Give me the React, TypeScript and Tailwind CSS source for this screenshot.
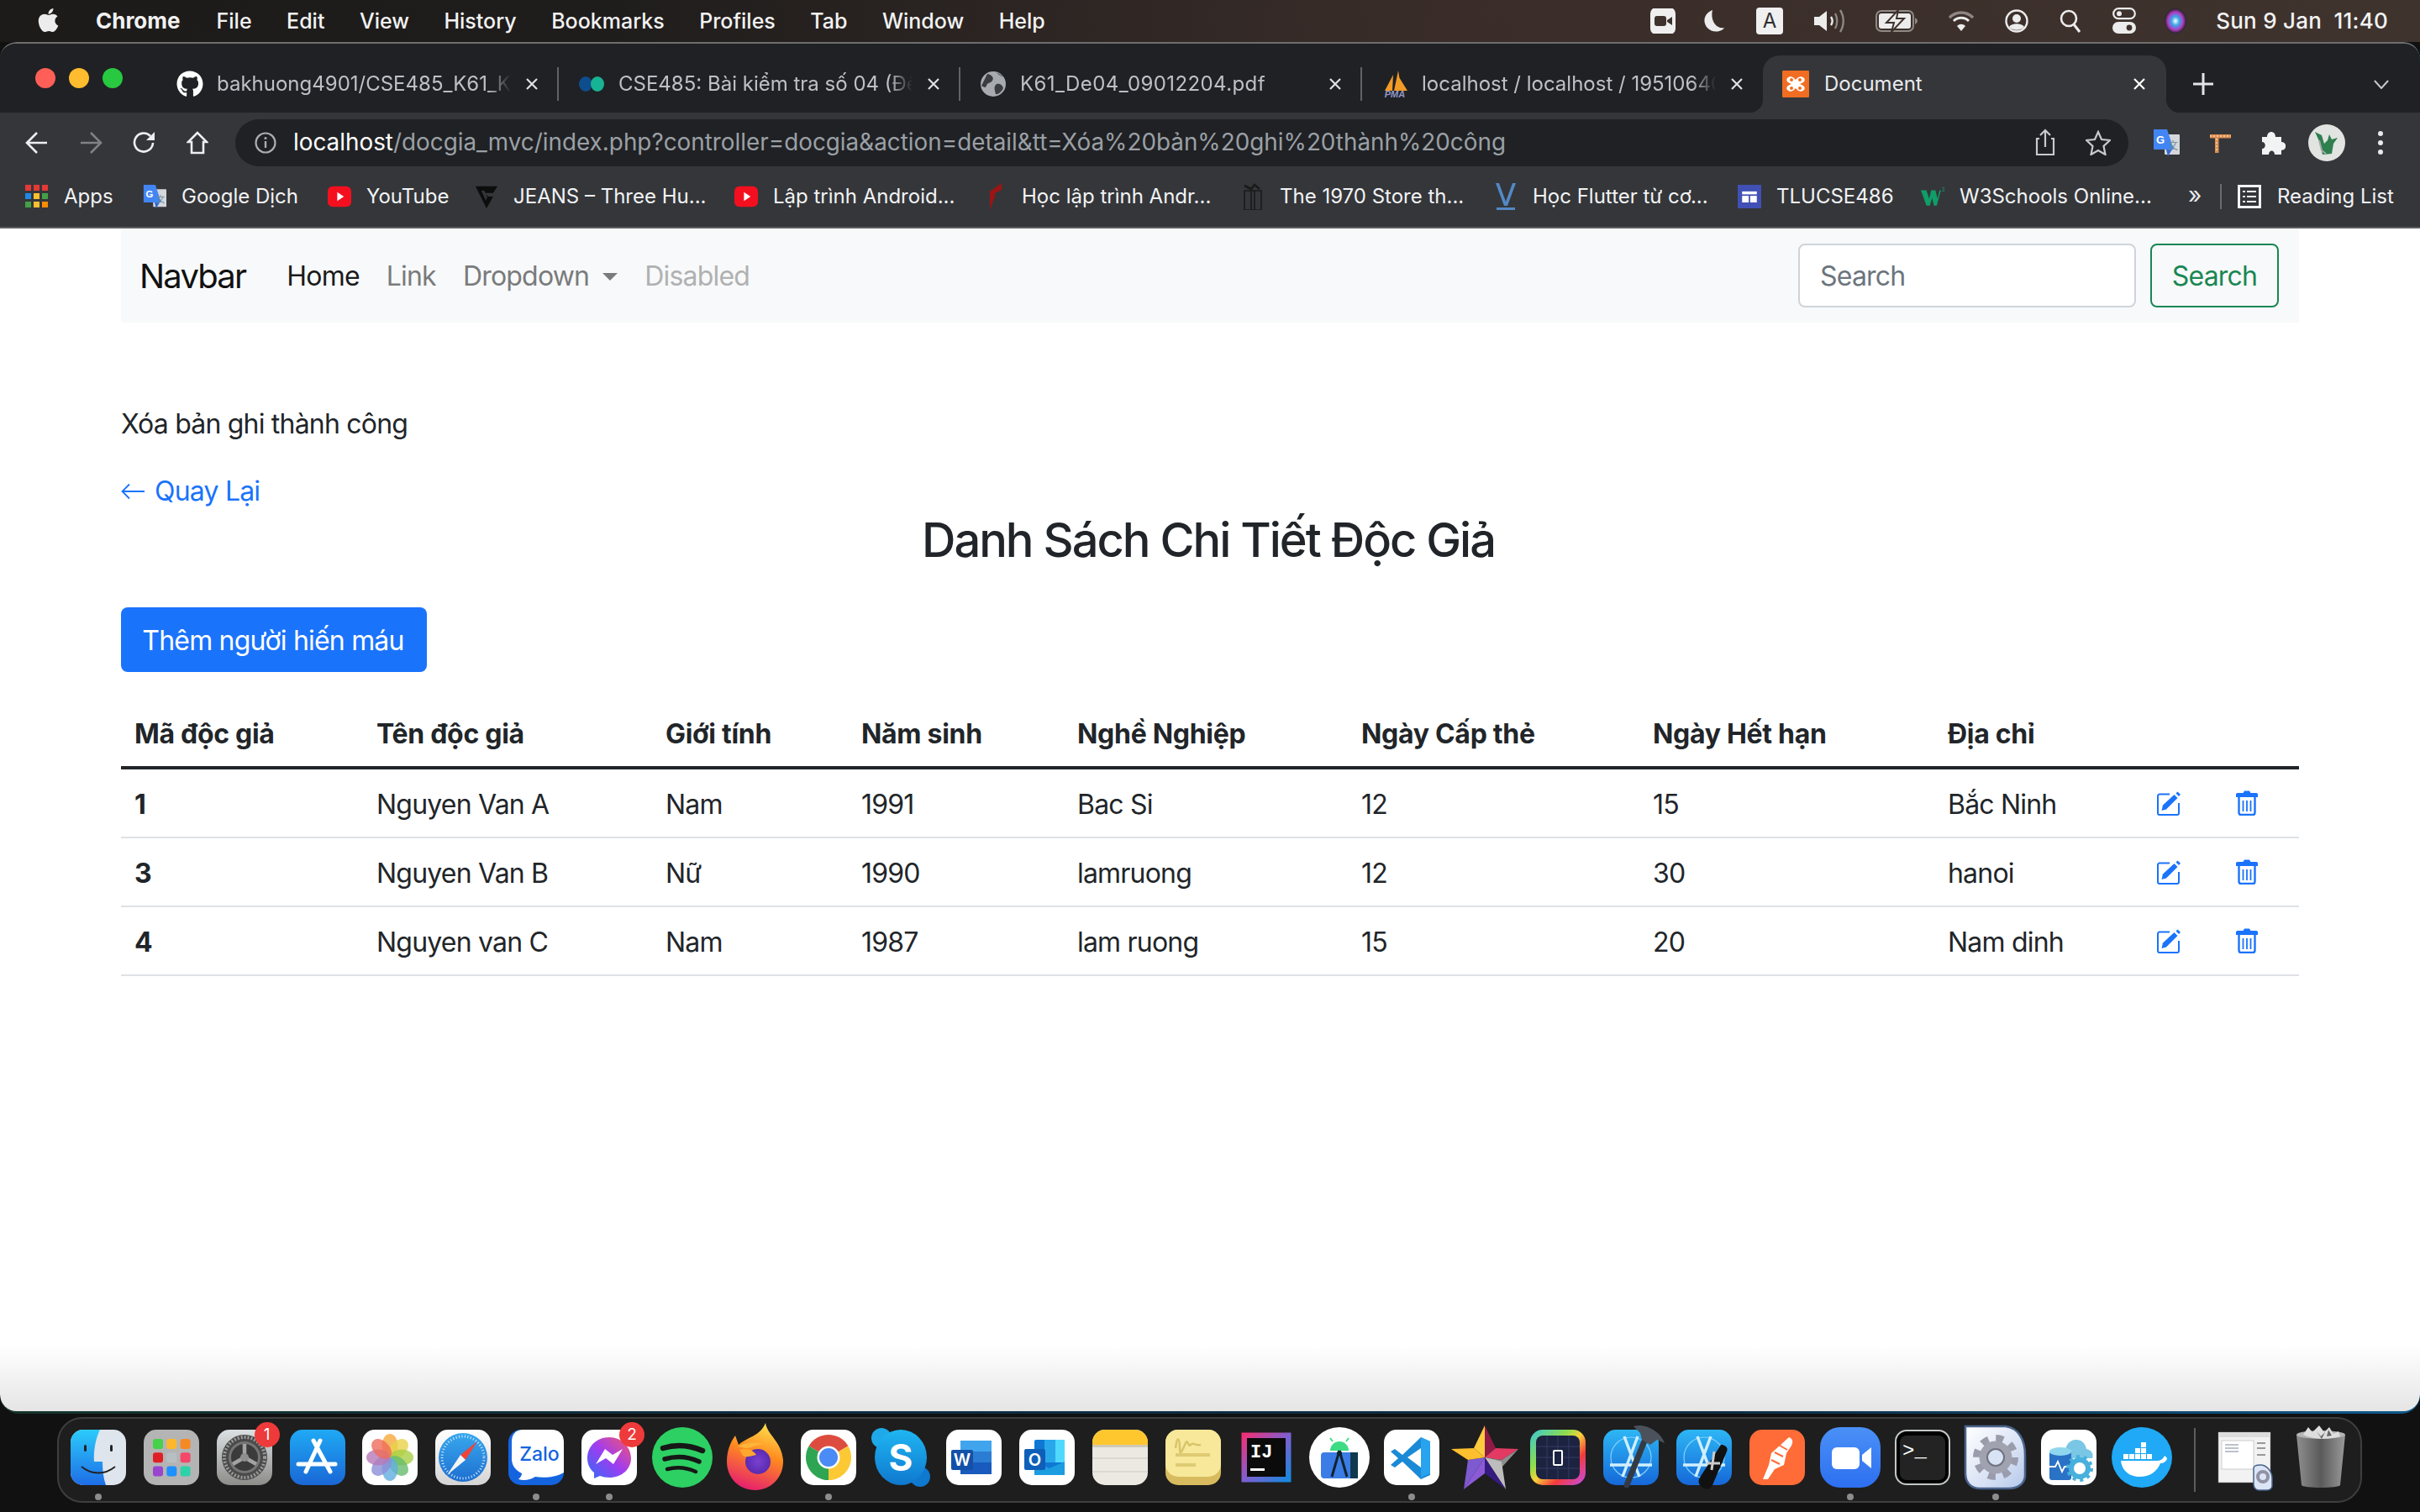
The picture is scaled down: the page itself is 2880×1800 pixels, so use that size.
import React from "react";
import { FaApple, FaGithub } from "react-icons/fa";

const menu = ["File", "Edit", "View", "History", "Bookmarks", "Profiles", "Tab", "Window", "Help"];

function MenuBar() {
  return (
    <div className="h-[50px] shrink-0 flex items-center justify-between pr-[38px] pl-[44px] bg-[linear-gradient(to_right,#1c1b1a,#1f1d1c_25%,#3a2d29_60%,#3f332e)] text-[#f2f2f2] text-[25px] leading-none">
      <div className="flex items-center">
        <FaApple className="w-[27px] h-[32px] text-[#ececec] mr-[43px] -mt-[3px]" />
        <span className="font-bold text-[26px] mr-[43px]">Chrome</span>
        <div className="flex items-center gap-[41.5px] font-medium">
          {menu.map((m) => (
            <span key={m}>{m}</span>
          ))}
        </div>
      </div>
      <div className="flex items-center gap-[37px]">
        <svg viewBox="0 0 30 30" className="w-[30px] h-[30px] -mr-[4px]"><rect width="30" height="32" y="-1" rx="7" fill="#efefef" /><rect x="5" y="9" width="14" height="12" rx="3" fill="#3d322d" /><path d="M20 14l6-4v10l-6-4z" fill="#3d322d" /></svg>
        <svg viewBox="0 0 26 30" className="w-[26px] h-[30px]"><path d="M11 2C3 5 0 12 2 18c2 7 10 11 17 9 3-1 5-2 6-4-9 2-17-8-14-21z" fill="#ececec" /></svg>
        <div className="w-[32px] h-[32px] rounded-[4px] bg-[#f0f0f0] text-[#2f2f2f] text-[24px] flex items-center justify-center">A</div>
        <svg viewBox="0 0 36 30" className="w-[36px] h-[30px]"><path d="M0 10h6l9-7v24l-9-7H0z" fill="#ececec" /><path d="M20 10c2 3 2 7 0 10" stroke="#ececec" strokeWidth="2.4" fill="none" /><path d="M25 6c3 5 3 13 0 18M31 2c5 8 5 18 0 26" stroke="#8d8682" strokeWidth="2.4" fill="none" /></svg>
        <svg viewBox="0 0 50 26" className="w-[50px] h-[26px]"><rect x="1" y="1" width="44" height="24" rx="6" stroke="#8f8985" strokeWidth="2" fill="none" /><rect x="4" y="4" width="38" height="18" rx="3" fill="#ececec" /><path d="M47 9c2 1 3 3 3 4s-1 3-3 4z" fill="#8f8985" /><path d="M27 0L13 15h9l-3 11 15-16h-9z" fill="#ececec" stroke="#3d322d" strokeWidth="2" /></svg>
        <svg viewBox="0 0 30 26" className="w-[30px] h-[26px]"><path d="M1 9c8-8 20-8 28 0" stroke="#8d8682" strokeWidth="3.4" fill="none" /><path d="M6 13c5-5 13-5 18 0" stroke="#ececec" strokeWidth="3" fill="none" /><path d="M10 19c3-3 7-3 10 0l-5 6z" fill="#ececec" /></svg>
        <svg viewBox="0 0 28 28" className="w-[28px] h-[28px]"><circle cx="14" cy="14" r="12.5" stroke="#ececec" strokeWidth="2.4" fill="none" /><circle cx="14" cy="11" r="5" fill="#ececec" /><path d="M5 21c3-5 15-5 18 0-4 5-14 5-18 0z" fill="#ececec" /></svg>
        <svg viewBox="0 0 26 28" className="w-[26px] h-[28px]"><circle cx="11" cy="11" r="9" stroke="#ececec" strokeWidth="2.6" fill="none" /><path d="M17 18l7 9" stroke="#ececec" strokeWidth="3" /></svg>
        <svg viewBox="0 0 28 32" className="w-[28px] h-[32px]"><rect x="1.2" y="1.2" width="25.6" height="12" rx="6" stroke="#ececec" strokeWidth="2.2" fill="none" /><circle cx="8" cy="7.2" r="3" fill="#ececec" /><rect y="17" width="28" height="14" rx="7" fill="#ececec" /><circle cx="20" cy="24" r="3.4" fill="#3d322d" /></svg>
        <svg viewBox="0 0 26 30" className="w-[26px] h-[30px] -ml-[3px]"><defs><radialGradient id="siri"><stop offset="0" stopColor="#fff" /><stop offset=".35" stopColor="#39a9e8" /><stop offset=".7" stopColor="#b13cc5" /><stop offset="1" stopColor="#222" /></radialGradient></defs><ellipse cx="13" cy="15" rx="13" ry="15" fill="url(#siri)" /></svg>
        <span className="whitespace-nowrap font-medium text-[26px] tracking-[0.25px] -ml-[2px]">Sun 9 Jan&nbsp;&nbsp;11:40</span>
      </div>
    </div>
  );
}

function CloseX({ light }: { light?: boolean }) {
  return (
    <svg viewBox="0 0 16 16" className="w-[16px] h-[16px] shrink-0">
      <path d="M2 2l12 12M14 2L2 14" stroke={light ? "#ffffff" : "#dfe1e5"} strokeWidth="2.2" />
    </svg>
  );
}

function Tab({ icon, text, sep = true, wide }: { icon: React.ReactNode; text: string; sep?: boolean; wide?: boolean }) {
  return (
    <div className="relative w-[478px] h-full shrink-0 flex items-center">
      <div className="w-[32px] h-[32px] ml-[23px] shrink-0 flex items-center justify-center">{icon}</div>
      <div className={`ml-[16px] w-[350px] whitespace-nowrap overflow-hidden text-[24px] text-[#bdc1c6] [mask-image:linear-gradient(to_right,#000_92%,transparent)] ${wide ? "tracking-[0.4px]" : ""}`}>{text}</div>
      <div className="ml-[17px]"><CloseX /></div>
      {sep && <div className="absolute right-0 top-[14px] h-[40px] w-[2px] bg-[#5f6368]" />}
    </div>
  );
}

function TabStrip() {
  return (
    <div className="h-[82px] shrink-0 flex bg-[#202124] items-center">
      <div className="flex gap-[16px] ml-[42px] mr-[41px] shrink-0">
        <span className="w-[24px] h-[24px] rounded-full bg-[#ff5f57]" />
        <span className="w-[24px] h-[24px] rounded-full bg-[#febc2e]" />
        <span className="w-[24px] h-[24px] rounded-full bg-[#28c840]" />
      </div>
      <div className="flex h-[68px] self-end items-stretch flex-1">
        <Tab icon={<FaGithub className="w-[32px] h-[32px] text-white" />} text="bakhuong4901/CSE485_K61_KTPM" />
        <Tab
          icon={
            <svg viewBox="0 0 32 32" className="w-[32px] h-[32px]"><ellipse cx="9" cy="16" rx="8" ry="9" fill="#0e4d8c" /><ellipse cx="23" cy="16" rx="8" ry="9" fill="#17b394" /></svg>
          }
          text="CSE485: Bài kiểm tra số 04 (Đề"
        />
        <Tab
          wide
          icon={
            <svg viewBox="0 0 32 32" className="w-[32px] h-[32px]"><circle cx="16" cy="16" r="15" fill="#a7aaae" /><path d="M9 4c6 1 8 5 6 8s-6 2-7 6c-1 3-3 2-6 0M20 16c4-1 7 1 8 5-2 4-6 8-9 7-1-4-3-9 1-12zM20 2c2 3 5 4 9 6" fill="#3a3c40" /></svg>
          }
          text="K61_De04_09012204.pdf"
        />
        <Tab
          sep={false}
          icon={
            <svg viewBox="0 0 32 32" className="w-[32px] h-[32px]"><path d="M4 24L14 5l-1 19zM15 24l5-24 4 24zM24 24l-3-16 10 16z" fill="#f29b27" /><text x="16" y="32" textAnchor="middle" fontSize="11" fontWeight="700" fontStyle="italic" fill="#8e97c9" fontFamily="Liberation Sans, sans-serif">PMA</text></svg>
          }
          text="localhost / localhost / 19510640"
        />
        <div className="relative w-[480px] h-full -ml-[1px] shrink-0 flex items-center rounded-t-[20px] bg-[#35363a]">
          <span className="absolute -left-[16px] bottom-0 w-[16px] h-[16px] bg-[radial-gradient(circle_at_0_0,transparent_16px,#35363a_16.5px)]" />
          <span className="absolute -right-[16px] bottom-0 w-[16px] h-[16px] bg-[radial-gradient(circle_at_100%_0,transparent_16px,#35363a_16.5px)]" />
          <svg viewBox="0 0 32 32" className="w-[32px] h-[32px] ml-[23px] shrink-0"><rect width="32" height="34" y="-1" rx="3" fill="#f06d22" /><path d="M6 9c3-3 7-2 10 2 3-4 7-5 10-2 2 3 0 5-5 7 5 2 7 4 5 7-3 3-7 2-10-2-3 4-7 5-10 2-2-3 0-5 5-7-5-2-7-4-5-7z" fill="#fff" /><circle cx="11" cy="11" r="2" fill="#f06d22" /><circle cx="21" cy="11" r="2" fill="#f06d22" /><circle cx="11" cy="21" r="2" fill="#f06d22" /><circle cx="21" cy="21" r="2" fill="#f06d22" /></svg>
          <div className="ml-[18px] w-[367px] text-[24px] text-[#e8eaed]">Document</div>
          <CloseX light />
        </div>
        <svg viewBox="0 0 24 28" className="w-[24px] h-[28px] ml-[32px] self-center"><path d="M12 1v26M0 14h24" stroke="#e3e5e8" strokeWidth="3" /></svg>
        <svg viewBox="0 0 20 12" className="w-[18px] h-[11px] ml-[191px] self-center"><path d="M1 1l9 10 9-10" stroke="#c6c8cc" strokeWidth="2.2" fill="none" /></svg>
      </div>
    </div>
  );
}

function Toolbar() {
  return (
    <div className="h-[64px] shrink-0 bg-[#35363a] flex items-center pt-[8px]">
      <svg viewBox="0 0 28 28" className="w-[28px] h-[28px] ml-[30px]"><path d="M26 14H3M14 2L2 14l12 12" stroke="#eceef0" strokeWidth="2.6" fill="none" /></svg>
      <svg viewBox="0 0 28 28" className="w-[28px] h-[28px] ml-[36px]"><path d="M2 14h23M14 2l12 12-12 12" stroke="#7f8185" strokeWidth="2.6" fill="none" /></svg>
      <svg viewBox="0 0 28 28" className="w-[28px] h-[28px] ml-[36px]"><path d="M24 14a11 11 0 1 1-3-8" stroke="#eceef0" strokeWidth="2.6" fill="none" /><path d="M26 1v10H16z" fill="#eceef0" /></svg>
      <svg viewBox="0 0 26 28" className="w-[26px] h-[28px] ml-[36px]"><path d="M13 2L2 13h4v13h14V13h4z" stroke="#eceef0" strokeWidth="2.6" fill="none" /></svg>
      <div className="ml-[32px] w-[2253px] h-[56px] rounded-full bg-[#202124] flex items-center">
        <svg viewBox="0 0 26 26" className="w-[26px] h-[26px] ml-[23px]"><circle cx="13" cy="13" r="11.5" stroke="#a9acb0" strokeWidth="2.2" fill="none" /><path d="M13 11v8" stroke="#a9acb0" strokeWidth="2.4" /><circle cx="13" cy="7.5" r="1.6" fill="#a9acb0" /></svg>
        <div className="ml-[20px] text-[27.85px] whitespace-nowrap text-[#9aa0a6] flex-1">
          <span className="text-white">localhost</span>/docgia_mvc/index.php?controller=docgia&amp;action=detail&amp;tt=Xóa%20bản%20ghi%20thành%20công
        </div>
        <svg viewBox="0 0 24 34" className="w-[24px] h-[34px]"><path d="M5 12H2v19h20V12h-3M12 22V2M6 8l6-6 6 6" stroke="#c8cacd" strokeWidth="2.2" fill="none" /></svg>
        <svg viewBox="0 0 30 30" className="w-[30px] h-[30px] ml-[36px] mr-[21px]"><path d="M15 2l4 9 10 1-7.500 7 2 10-8.500-5-8.500 5 2-10L1 12l10-1z" stroke="#c8cacd" strokeWidth="2.2" fill="none" /></svg>
      </div>
      <svg viewBox="0 0 32 32" className="w-[32px] h-[32px] ml-[29px]"><rect x="14" y="6" width="18" height="24" rx="1" fill="#d5d7da" /><path d="M1 0h16l8 24H1z" fill="#4285f4" /><path d="M16 24h7l-5 8z" fill="#3367d6" /><text x="9" y="17" textAnchor="middle" fontSize="13" fontWeight="700" fill="#fff" fontFamily="Liberation Sans, sans-serif">G</text><text x="24" y="24" textAnchor="middle" fontSize="12" fill="#6f8a96" fontFamily="Noto Sans CJK SC, sans-serif">文</text></svg>
      <svg viewBox="0 0 28 32" className="w-[28px] h-[32px] ml-[34px]"><path d="M2 6h25v4.500H12.500V28H8V10.500H2z" fill="#dd8f50" /><path d="M2 8h25M10 11v16" stroke="#f7d4b0" strokeWidth="1.400" strokeDasharray="2 2" /></svg>
      <svg viewBox="0 0 30 30" className="w-[30px] h-[30px] ml-[34px]"><path d="M2 8h6c0-8 10-8 10 0h7v6c7 0 7 10 0 10v5H17c0-6-7-6-7 0H2v-7c5 0 5-8 0-8z" fill="#f1f3f4" /></svg>
      <div className="w-[44px] h-[44px] ml-[27px] rounded-full bg-[#e1e4e0] flex items-center justify-center overflow-hidden">
        <svg viewBox="0 0 40 40" className="w-[40px] h-[40px]"><path d="M6 7l8 4 3 10 4-4 2-7 3 6 7-2-5 7-2 12-11 1-4-16z" fill="#2f7f4f" /><path d="M11 17l3 12 5 4" stroke="#a8aaa8" strokeWidth="2" fill="none" /></svg>
      </div>
      <svg viewBox="0 0 8 30" className="w-[8px] h-[30px] ml-[38px]"><circle cx="4" cy="4" r="3" fill="#e8eaed" /><circle cx="4" cy="15" r="3" fill="#e8eaed" /><circle cx="4" cy="26" r="3" fill="#e8eaed" /></svg>
    </div>
  );
}

function YT() {
  return (
    <svg viewBox="0 0 32 32" className="w-[32px] h-[32px]"><rect y="2" width="32" height="28" rx="7" fill="#f40f1f" /><path d="M13 10l9 6-9 6z" fill="#fff" /></svg>
  );
}

const bookmarks: { w: string; t: string; icon: React.ReactNode }[] = [
  {
    w: "w-[140px]", t: "Apps",
    icon: (
      <svg viewBox="0 0 28 28" className="w-[28px] h-[28px]">
        {[0, 10, 20].map((y, r) => [0, 10, 20].map((x, c) => (
          <rect key={`${r}${c}`} x={x} y={y} width="7" height="7" fill={[["#e53935", "#e53935", "#e53935"], ["#1e88e5", "#fbc02d", "#43a047"], ["#43a047", "#fbc02d", "#fb8c00"]][r][c]} />
        )))}
      </svg>
    ),
  },
  {
    w: "w-[220px]", t: "Google Dịch",
    icon: (
      <svg viewBox="0 0 32 32" className="w-[30px] h-[30px]"><rect x="14" y="6" width="18" height="24" rx="1" fill="#d5d7da" /><path d="M1 0h16l8 24H1z" fill="#4285f4" /><path d="M16 24h7l-5 8z" fill="#3367d6" /><text x="9" y="17" textAnchor="middle" fontSize="13" fontWeight="700" fill="#fff" fontFamily="Liberation Sans, sans-serif">G</text><text x="24" y="24" textAnchor="middle" fontSize="12" fill="#6f8a96" fontFamily="Noto Sans CJK SC, sans-serif">文</text></svg>
    ),
  },
  { w: "w-[175px]", t: "YouTube", icon: <YT /> },
  {
    w: "w-[309px]", t: "JEANS – Three Hu...",
    icon: (
      <svg viewBox="0 0 32 32" className="w-[32px] h-[32px]"><path d="M1 2h30l-6 9H14l4 5h7l-9 16L1 2zm8 6l6 13 2-4-4-9z" fill="#0d0d0d" /></svg>
    ),
  },
  { w: "w-[296px]", t: "Lập trình Android...", icon: <YT /> },
  {
    w: "w-[307px]", t: "Học lập trình Andr...",
    icon: (
      <svg viewBox="0 0 28 32" className="w-[28px] h-[32px]"><path d="M8 32V10l14-10v8l-8 4v6H8z" fill="#9c1414" /><path d="M8 16h6L8 32z" fill="#9c1414" /></svg>
    ),
  },
  {
    w: "w-[301px]", t: "The 1970 Store th...",
    icon: (
      <svg viewBox="0 0 28 32" className="w-[28px] h-[32px]"><path d="M4 9h20v23H4zM12 9v23M16 9v23" stroke="#1a1a1a" strokeWidth="1.6" fill="none" /><path d="M4 3l8 4 4-5 6 5" stroke="#1a1a1a" strokeWidth="2.6" fill="none" /></svg>
    ),
  },
  {
    w: "w-[290px]", t: "Học Flutter từ cơ...",
    icon: (
      <svg viewBox="0 0 28 32" className="w-[28px] h-[32px]"><path d="M2 0h4l8 22 8-22h4l-10 27h-4z" fill="#5388c4" /><rect x="3" y="29" width="22" height="3" fill="#5388c4" /></svg>
    ),
  },
  {
    w: "w-[218px]", t: "TLUCSE486",
    icon: (
      <svg viewBox="0 0 32 32" className="w-[32px] h-[32px]"><rect width="32" height="32" fill="#4150b5" /><rect x="6" y="9" width="20" height="4" fill="#fff" /><rect x="6" y="15" width="9" height="9" fill="#fff" /><rect x="17" y="15" width="9" height="9" fill="#fff" /></svg>
    ),
  },
  {
    w: "w-[318px]", t: "W3Schools Online...",
    icon: (
      <svg viewBox="0 0 34 30" className="w-[34px] h-[30px]"><path d="M0 6h8l4 12 3-12h6l3 12 3-12h2l-6 22h-4l-3-11-3 11h-5z" fill="#0f9d68" /><text x="30" y="8" fontSize="9" fill="#0f9d68" fontFamily="Liberation Sans, sans-serif">3</text></svg>
    ),
  },
];

function BookmarksBar() {
  return (
    <div className="h-[74px] shrink-0 bg-[#35363a] flex items-center border-b-[2px] border-[#5c5d60] text-[24px] text-[#f1f3f4] pl-[30px]">
      {bookmarks.map((b) => (
        <div key={b.t} className={`${b.w} shrink-0 flex items-center gap-[18px] whitespace-nowrap`}>
          <div className="w-[28px] h-[32px] shrink-0 flex items-center justify-center">{b.icon}</div>
          <span>{b.t}</span>
        </div>
      ))}
      <span className="w-[30px] text-[28px] leading-none -mt-[4px] text-[#e8eaed]">»</span>
      <div className="w-[2px] h-[30px] bg-[#6a6b6e] ml-[8px]" />
      <svg viewBox="0 0 28 28" className="w-[28px] h-[28px] ml-[19px]"><rect x="1.500" y="1.500" width="25" height="25" stroke="#f1f3f4" strokeWidth="3" fill="none" /><path d="M6 8h3M11 8h11M6 14h3M11 14h11M6 20h3M11 20h11" stroke="#f1f3f4" strokeWidth="2.200" /></svg>
      <span className="ml-[19px] whitespace-nowrap">Reading List</span>
    </div>
  );
}

function EditIcon() {
  return (
    <svg viewBox="0 0 28 29" className="w-[28px] h-[29px] block">
      <path d="M15 3.500H3a2 2 0 0 0-2 2V26a2 2 0 0 0 2 2h21a2 2 0 0 0 2-2V14" stroke="#1a73fb" strokeWidth="2" fill="none" />
      <path d="M7 16.500L20.500 4l4 4L11 21.500l-5.500 1.500z" fill="#1a73fb" />
      <path d="M22.500 2.500L24.500.5 28 3.800l-2 2.200z" fill="#1a73fb" />
    </svg>
  );
}

function TrashIcon() {
  return (
    <svg viewBox="0 0 26 30" className="w-[26px] h-[30px] block">
      <path d="M2 3h6.500L10 .5h6L17.500 3H24a2 2 0 0 1 2 2.500V8H0V5.500A2 2 0 0 1 2 3z" fill="#1a73fb" />
      <path d="M3.500 8v18.500a2.500 2.500 0 0 0 2.500 2.500h14a2.500 2.500 0 0 0 2.500-2.500V8" stroke="#1a73fb" strokeWidth="2.400" fill="none" />
      <path d="M8.500 12v13M13 12v13M17.500 12v13" stroke="#1a73fb" strokeWidth="1.800" />
    </svg>
  );
}

const rows = [
  ["1", "Nguyen Van A", "Nam", "1991", "Bac Si", "12", "15", "Bắc Ninh"],
  ["3", "Nguyen Van B", "Nữ", "1990", "lamruong", "12", "30", "hanoi"],
  ["4", "Nguyen van C", "Nam", "1987", "lam ruong", "15", "20", "Nam dinh"],
];
const heads = ["Mã độc giả", "Tên độc giả", "Giới tính", "Năm sinh", "Nghề Nghiệp", "Ngày Cấp thẻ", "Ngày Hết hạn", "Địa chỉ", "", ""];

function Page() {
  return (
    <div className="flex-1 min-h-0 px-[144px] rounded-b-[20px] overflow-hidden bg-[linear-gradient(to_bottom,#ffffff_1330px,#e5e5e5_100%)] text-[#212529] text-[32px] leading-[48px] tracking-[-0.8px]">
      <nav className="h-[112px] bg-[#f8f9fa] flex items-center pl-[22px] pr-[24px]">
        <span className="text-[40px] leading-[60px] tracking-[-1.8px] text-[#111] mr-[33px] pt-[2px]">Navbar</span>
        <a className="px-[16px] pt-[2px] text-[#1b1b1b]">Home</a>
        <a className="px-[16px] pt-[2px] text-[#7a7b7c]">Link</a>
        <a className="px-[16px] pt-[2px] text-[#7a7b7c] flex items-center">
          Dropdown
          <span className="ml-[16px] w-0 h-0 border-x-[9px] border-x-transparent border-t-[9px] border-t-[#7a7b7c]" />
        </a>
        <a className="px-[16px] pt-[2px] text-[#b0b1b2]">Disabled</a>
        <div className="ml-auto flex items-center gap-[17px]">
          <div className="w-[402px] h-[76px] rounded-[8px] border-2 border-[#ced4da] bg-white pt-[2px] px-[24px] flex items-center text-[#6c757d]">Search</div>
          <div className="w-[153px] h-[76px] rounded-[8px] border-2 border-[#198754] pt-[2px] flex items-center justify-center text-[#198754]">Search</div>
        </div>
      </nav>
      <p className="mt-[97px]">Xóa bản ghi thành công</p>
      <a className="mt-[32px] flex items-center text-[#1a73fb]">
        <svg viewBox="0 0 28 20" className="w-[28px] h-[20px] mr-[12px]"><path d="M28 10H2M10 1.500L1.500 10l8.500 8.500" stroke="#1a73fb" strokeWidth="1.800" fill="none" /></svg>
        Quay Lại
      </a>
      <h3 className="mt-[1px] text-center text-[56px] leading-[67px] font-medium tracking-[-2px] -translate-x-[2px]">Danh Sách Chi Tiết Độc Giả</h3>
      <button className="mt-[46px] block w-[364px] h-[77px] pt-[2px] pr-[2px] rounded-[8px] bg-[#1a73fb] text-white text-[32px]">Thêm người hiến máu</button>
      <table className="mt-[32px] w-[2592px] table-fixed border-separate border-spacing-0">
        <colgroup>
          <col className="w-[288px]" /><col className="w-[344px]" /><col className="w-[233px]" /><col className="w-[257px]" /><col className="w-[338px]" /><col className="w-[347px]" /><col className="w-[351px]" /><col className="w-[249px]" /><col className="w-[94px]" /><col className="w-[91px]" />
        </colgroup>
        <thead>
          <tr>
            {heads.map((h, i) => (
              <th key={i} className="pt-[18px] pb-[14px] px-[16px] text-left font-bold tracking-[-0.3px] border-b-[4px] border-[#212529] h-[84px]">{h}</th>
            ))}
          </tr>
        </thead>
        <tbody>
          {rows.map((r) => (
            <tr key={r[0]}>
              {r.map((c, i) => (
                <td key={i} className={`pt-[18px] pb-[14px] px-[16px] border-b-[2px] border-[#dee2e6] ${i === 0 ? "font-bold" : ""}`}>{c}</td>
              ))}
              <td className="p-[16px] border-b-[2px] border-[#dee2e6]"><EditIcon /></td>
              <td className="p-[16px] border-b-[2px] border-[#dee2e6]"><TrashIcon /></td>
            </tr>
          ))}
        </tbody>
      </table>
    </div>
  );
}

function Ic({ children, dot, badge }: { children: React.ReactNode; dot?: boolean; badge?: string }) {
  return (
    <div className="relative w-[66px] h-[66px] shrink-0 flex items-center justify-center">
      <svg viewBox="-9 -9 84 84" className="w-[84px] h-[84px] shrink-0 overflow-visible">{children}</svg>
      {dot && <span className="absolute left-[29px] top-[76px] w-[8px] h-[8px] rounded-full bg-[#8d8d8d]" />}
      {badge && <span className="absolute -right-[9px] -top-[9px] w-[30px] h-[30px] rounded-full bg-[#ee3a3a] text-white text-[19px] leading-[30px] text-center">{badge}</span>}
    </div>
  );
}

function Dock() {
  return (
    <div className="mt-[4px] ml-[68px] w-[2743px] h-[102px] rounded-[30px] border-2 border-[#3e3e3e] bg-[#1e1e1e] flex items-start pl-[14px] pt-[13px] gap-[20.86px]">
      <Ic dot>
        <defs><linearGradient id="fnd" x1="0" y1="0" x2="0" y2="1"><stop offset="0" stopColor="#2bcbfb" /><stop offset="1" stopColor="#1e6de6" /></linearGradient></defs>
        <rect width="66" height="66" rx="15" fill="#dfe5ec" />
        <path d="M15 0h20c-5 10-8 25-7 38h10c0 10 1 20 4 28H15A15 15 0 0 1 0 51V15A15 15 0 0 1 15 0z" fill="url(#fnd)" />
        <rect x="16" y="18" width="3" height="8" rx="1.500" fill="#222" /><rect x="47" y="18" width="3" height="8" rx="1.500" fill="#222" />
        <path d="M13 44c12 10 28 10 40 0" stroke="#222" strokeWidth="1.800" fill="none" />
      </Ic>
      <Ic>
        <rect width="66" height="66" rx="15" fill="#b4b4b4" />
        {[["#45d14a", "#fdb72a", "#f58a24"], ["#e01f25", "#b8bfc2", "#f4476a"], ["#9a45d0", "#1e90ff", "#2fd1a8"]].map((row, r) => row.map((c, i) => (
          <rect key={`${r}${i}`} x={11 + i * 16.3} y={11 + r * 16.3} width="12" height="12" rx="3" fill={c} />
        )))}
      </Ic>
      <Ic badge="1">
        <defs><linearGradient id="sys" x1="0" y1="0" x2="0" y2="1"><stop offset="0" stopColor="#dbe0e2" /><stop offset="1" stopColor="#8d8d8a" /></linearGradient></defs>
        <rect width="66" height="66" rx="15" fill="url(#sys)" />
        <circle cx="33" cy="33" r="27" fill="#4a4a4a" />
        <circle cx="33" cy="33" r="24" fill="none" stroke="#9a9a9a" strokeWidth="4" strokeDasharray="2 2" />
        <circle cx="33" cy="33" r="19" fill="#757575" /><circle cx="33" cy="33" r="16" fill="#3b3b3b" />
        <path d="M33 33V17M33 33l14 8M33 33l-14 8" stroke="#a3a3a3" strokeWidth="4.500" />
        <circle cx="33" cy="33" r="5" fill="#8f8f8f" />
      </Ic>
      <Ic>
        <defs><linearGradient id="aps" x1="0" y1="0" x2="0" y2="1"><stop offset="0" stopColor="#1fa9f4" /><stop offset="1" stopColor="#1a67d6" /></linearGradient></defs>
        <rect width="66" height="66" rx="15" fill="url(#aps)" />
        <path d="M36 13L19 50M28 13l20 37M10 41h44" stroke="#fff" strokeWidth="5" strokeLinecap="round" />
      </Ic>
      <Ic>
        <rect width="66" height="66" rx="15" fill="#fff" />
        {["#f6a93b", "#e8d24a", "#a8cf45", "#66bd6d", "#62aee0", "#8c8fd8", "#b779b9", "#ee6b5b"].map((c, i) => (
          <ellipse key={c} cx="33" cy="19" rx="9.500" ry="14" fill={c} opacity=".8" transform={`rotate(${i * 45} 33 33)`} />
        ))}
      </Ic>
      <Ic>
        <defs><linearGradient id="saf" x1="0" y1="0" x2="0" y2="1"><stop offset="0" stopColor="#38a8ee" /><stop offset="1" stopColor="#1e6fd0" /></linearGradient><linearGradient id="sfb" x1="0" y1="0" x2="0" y2="1"><stop offset="0" stopColor="#fff" /><stop offset="1" stopColor="#d4d4d4" /></linearGradient></defs>
        <rect width="66" height="66" rx="15" fill="url(#sfb)" />
        <circle cx="33" cy="33" r="29" fill="url(#saf)" />
        <circle cx="33" cy="33" r="25" fill="none" stroke="#d6ecff" strokeWidth="3" strokeDasharray="1 2.500" />
        <path d="M50 14L30 30l6 6z" fill="#f04438" /><path d="M14 54l16-24 6 6z" fill="#f5f5f5" />
      </Ic>
      <Ic dot>
        <rect width="66" height="66" rx="15" fill="#1464e0" />
        <path d="M4 15C4 6 8 0 18 0h33c10 0 15 6 15 15v36c-8 5-22 7-34 5-6 4-14 5-20 3 3-3 4-5 4-7C8 48 4 42 4 35z" fill="#fff" />
        <text x="37" y="37" textAnchor="middle" fontSize="23" fontWeight="500" fill="#1464e0" fontFamily="Inter, sans-serif">Zalo</text>
      </Ic>
      <Ic dot badge="2">
        <defs><linearGradient id="msg" x1="0" y1="1" x2="1" y2="0"><stop offset="0" stopColor="#2f6cf7" /><stop offset=".5" stopColor="#a03cf0" /><stop offset="1" stopColor="#f5576c" /></linearGradient></defs>
        <rect width="66" height="66" rx="15" fill="#fff" />
        <path d="M33 9C18 9 7 20 7 34c0 7 3 13 8 17v7l7-3c3 1 7 2 11 2 15 0 26-10 26-23S48 9 33 9z" fill="url(#msg)" />
        <path d="M17 41l11-18 9 7 12-7-11 18-9-7z" fill="#fff" />
      </Ic>
      <Ic>
        <circle cx="33" cy="33" r="36" fill="#2dd063" />
        <path d="M10 22c16-5 31-4 47 3" stroke="#171717" strokeWidth="6.500" fill="none" strokeLinecap="round" />
        <path d="M12 35c14-4 28-3 41 3" stroke="#171717" strokeWidth="5.500" fill="none" strokeLinecap="round" />
        <path d="M15 47c11-3 23-2 34 3" stroke="#171717" strokeWidth="4.500" fill="none" strokeLinecap="round" />
      </Ic>
      <Ic>
        <defs><linearGradient id="ffx" x1=".7" y1="0" x2=".4" y2="1"><stop offset="0" stopColor="#ffe14d" /><stop offset=".45" stopColor="#ff8a1f" /><stop offset="1" stopColor="#e6206e" /></linearGradient><radialGradient id="ffp"><stop offset="0" stopColor="#7a3fd0" /><stop offset="1" stopColor="#5a2bb0" /></radialGradient></defs>
        <path d="M45-8c2 14 19 22 21 44C67 58 50 72 33 72 13 72-1 57-1 38-1 26 3 15 9 7l4 11C22 9 39 8 45-8z" fill="url(#ffx)" />
        <path d="M12 20c9-5 22-6 32-2-12-1-12 4-23 4z" fill="#ffb43a" />
        <circle cx="36" cy="38" r="15" fill="url(#ffp)" />
        <path d="M14 24c8-3 16 0 20 6-6 1-12 4-16 1z" fill="#ffa62e" />
      </Ic>
      <Ic dot>
        <rect width="66" height="66" rx="15" fill="#fff" />
        <path d="M33 33L9.600 19.500A27 27 0 0 1 56.400 19.500z" fill="#dd4d3f" />
        <path d="M33 33L56.400 19.500A27 27 0 0 1 33 60z" fill="#fcc934" />
        <path d="M33 33V60A27 27 0 0 1 9.600 19.500z" fill="#2ea552" />
        <circle cx="33" cy="33" r="13.500" fill="#fff" /><circle cx="33" cy="33" r="11" fill="#4a8bf5" />
      </Ic>
      <Ic>
        <defs><linearGradient id="sky" x1="0" y1="0" x2="0" y2="1"><stop offset="0" stopColor="#1fb6f2" /><stop offset="1" stopColor="#0f78cf" /></linearGradient></defs>
        <circle cx="10" cy="10" r="12" fill="#1fa9e8" /><circle cx="56" cy="56" r="12" fill="#0f78cf" />
        <ellipse cx="33" cy="33" rx="31" ry="33" fill="url(#sky)" />
        <text x="33" y="49" textAnchor="middle" fontSize="44" fontWeight="700" fill="#fff" fontFamily="Inter, sans-serif">S</text>
      </Ic>
      <Ic>
        <rect width="66" height="66" rx="15" fill="#fff" />
        <rect x="17" y="13" width="37" height="13" fill="#41a5ee" /><rect x="17" y="26" width="37" height="13" fill="#2b7cd3" /><rect x="17" y="39" width="37" height="14" fill="#185abd" />
        <rect x="6" y="24" width="26" height="24" rx="2" fill="#1350a8" />
        <text x="19" y="43" textAnchor="middle" fontSize="20" fontWeight="600" fill="#fff" fontFamily="Inter, sans-serif">W</text>
      </Ic>
      <Ic>
        <rect width="66" height="66" rx="15" fill="#fff" />
        <rect x="18" y="12" width="36" height="42" rx="2" fill="#0f78d4" />
        <rect x="30" y="12" width="13" height="13" fill="#28a8ea" /><rect x="43" y="12" width="11" height="13" fill="#50d9ff" /><rect x="30" y="25" width="13" height="14" fill="#28a8ea" /><rect x="43" y="25" width="11" height="14" fill="#50d9ff" />
        <path d="M18 38l18 8 18-8v16H18z" fill="#1c9de0" />
        <rect x="6" y="23" width="25" height="25" rx="2" fill="#0f5fb8" />
        <text x="18.500" y="43" textAnchor="middle" fontSize="20" fontWeight="600" fill="#fff" fontFamily="Inter, sans-serif">O</text>
      </Ic>
      <Ic>
        <rect width="66" height="66" rx="15" fill="#ece9e2" />
        <path d="M0 15A15 15 0 0 1 15 0h36a15 15 0 0 1 15 15v4H0z" fill="#fec72e" />
        <rect y="18" width="66" height="3" fill="#cfcab8" />
        <path d="M0 34h66M0 50h66" stroke="#d6d3cb" strokeWidth="1.500" />
      </Ic>
      <Ic>
        <rect width="66" height="66" rx="15" fill="#d8bb5e" />
        <rect width="66" height="56" rx="15" fill="#f7e89a" />
        <path d="M12 22c2-16 5-12 5 0s4 0 7-6 3 6 6 2 6 2 12 0" stroke="#d9c56a" strokeWidth="2.500" fill="none" />
        <rect x="12" y="28" width="41" height="4" fill="#dfcb73" /><rect x="12" y="40" width="24" height="4" fill="#dfcb73" />
      </Ic>
      <Ic>
        <defs><linearGradient id="ij" x1="0" y1="0" x2="1" y2="1"><stop offset="0" stopColor="#fe2a6e" /><stop offset=".5" stopColor="#7f5fd0" /><stop offset="1" stopColor="#0c8ce0" /></linearGradient></defs>
        <rect x="3.500" y="3.500" width="59" height="59" fill="url(#ij)" />
        <rect x="10" y="10" width="46" height="46" fill="#0b0b0b" />
        <text x="14" y="33" fontSize="22" fontWeight="700" fill="#fff" fontFamily="Liberation Mono, monospace">IJ</text>
        <rect x="14" y="46" width="17" height="3" fill="#fff" />
      </Ic>
      <Ic>
        <circle cx="33" cy="33" r="36" fill="#fff" />
        <rect x="11" y="27" width="44" height="31" rx="4" fill="#3c7ce6" /><rect x="46" y="27" width="9" height="31" fill="#0f3a4e" />
        <path d="M22 25a11 11 0 0 1 22 0z" fill="#3ddc84" /><path d="M25 14l-3-4M41 14l3-4" stroke="#3ddc84" strokeWidth="2" />
        <path d="M33 25l-9 31M33 25l9 31" stroke="#10242e" strokeWidth="3" /><circle cx="33" cy="28" r="3" fill="#10242e" />
      </Ic>
      <Ic dot>
        <rect width="66" height="66" rx="15" fill="#fff" />
        <path d="M44 9L22 30 13 23l-5 3 9 8-9 8 5 3 9-7 22 21 11-5V14z" fill="#1b8ad6" />
        <path d="M44 9v48l11-5V14z" fill="#28a3ee" /><path d="M44 22L28 33l16 12z" fill="#fff" />
      </Ic>
      <Ic>
        <polygon points="33,-5 46,22 33,33" fill="#8f1a46" /><polygon points="33,-5 20,22 33,33" fill="#fdcc3e" />
        <polygon points="73,23 46,22 33,33 53,36" fill="#e23a63" /><polygon points="73,23 53,36 33,33 54,44" fill="#8e8e8e" />
        <polygon points="58,71 53,38 33,33" fill="#bdbdbd" /><polygon points="58,71 33,33 33,52" fill="#351a80" />
        <polygon points="8,71 33,33 33,52" fill="#8c5ad6" /><polygon points="8,71 13,36 33,33" fill="#7d5ad0" />
        <polygon points="-7,23 20,22 33,33 13,36" fill="#fcbf2e" />
      </Ic>
      <Ic>
        <defs><linearGradient id="sim" x1="0" y1="0" x2="1" y2="1"><stop offset="0" stopColor="#38c8d8" /><stop offset=".35" stopColor="#8ddd4c" /><stop offset=".5" stopColor="#f8d13b" /><stop offset=".7" stopColor="#f23b3b" /><stop offset="1" stopColor="#c44cf0" /></linearGradient></defs>
        <rect width="66" height="66" rx="15" fill="url(#sim)" />
        <rect x="7" y="7" width="52" height="52" rx="8" fill="#1c2340" />
        <path d="M7 20h52M7 33h52M7 46h52M20 7v52M33 7v52M46 7v52" stroke="#333c63" strokeWidth="1" />
        <rect x="28" y="25" width="10" height="17" rx="1" fill="#1c2340" stroke="#fff" strokeWidth="2" />
      </Ic>
      <Ic>
        <defs><linearGradient id="xc" x1="0" y1="0" x2="0" y2="1"><stop offset="0" stopColor="#2db6f5" /><stop offset="1" stopColor="#1668d8" /></linearGradient></defs>
        <rect width="66" height="66" rx="15" fill="url(#xc)" />
        <circle cx="33" cy="33" r="24" fill="none" stroke="#7fd0ff" strokeWidth="1.200" />
        <path d="M25 8l18 48M41 8L23 56M8 42h50" stroke="#cfeeff" strokeWidth="3.500" fill="none" />
        <path d="M52 6L28 66" stroke="#333a44" strokeWidth="7" strokeLinecap="round" />
        <path d="M36-4C50-8 68 2 73 16l-9-4-8 6-10-6-2-8z" fill="#4b525c" />
      </Ic>
      <Ic>
        <rect width="66" height="66" rx="15" fill="url(#xc)" />
        <circle cx="33" cy="33" r="24" fill="none" stroke="#7fd0ff" strokeWidth="1.200" />
        <path d="M25 8l18 48M41 8L23 56M8 42h50" stroke="#cfeeff" strokeWidth="3.500" fill="none" />
        <path d="M53 18c6 0 9 4 7 8L43 66c-3 5-7 6-11 3l-4-3c-2-3-2-6 0-9z" fill="#111" />
        <path d="M45 26l-3 22" stroke="#ccc" strokeWidth="3" /><path d="M36 40h16" stroke="#ccc" strokeWidth="3" />
      </Ic>
      <Ic>
        <rect width="66" height="66" rx="15" fill="#ff6c37" />
        <path d="M47 9c5 2 5 6 3 10l-6 9-3 14-11 5-8 12h-6l7-17 3-14z" fill="#fff" />
        <path d="M33 17l12 7M30 27l10 5M26 36l10 5" stroke="#ff6c37" strokeWidth="2" />
      </Ic>
      <Ic dot>
        <defs><linearGradient id="zm" x1="0" y1="0" x2="0" y2="1"><stop offset="0" stopColor="#4a90f7" /><stop offset="1" stopColor="#2d6ff0" /></linearGradient></defs>
        <rect x="-3" y="-3" width="72" height="72" rx="24" fill="url(#zm)" />
        <rect x="11" y="21" width="33" height="26" rx="6" fill="#fff" />
        <path d="M47 30l11-9v25l-11-9z" fill="#fff" />
      </Ic>
      <Ic>
        <rect x="1" y="1" width="64" height="64" rx="13" fill="#000" stroke="#c4c8c8" strokeWidth="2" />
        <rect x="6" y="7" width="54" height="53" rx="8" fill="#232323" />
        <text x="9" y="32" fontSize="24" fill="#fff" fontFamily="Liberation Mono, monospace">&gt;_</text>
      </Ic>
      <Ic dot>
        <defs><linearGradient id="gp" x1="0" y1="0" x2="1" y2="1"><stop offset="0" stopColor="#ffffff" /><stop offset=".6" stopColor="#d8e2f4" /><stop offset="1" stopColor="#b3c6ea" /></linearGradient></defs>
        <path d="M-3-4H45C60-2 68 12 68 30v24c0 10-8 16-20 16H14C3 70-3 62-3 52z" fill="url(#gp)" stroke="#4a648c" strokeWidth="2.500" />
        <circle cx="33" cy="33" r="19" fill="#a0a2b0" stroke="#a0a2b0" />
        <circle cx="33" cy="33" r="23" fill="none" stroke="#9a9cab" strokeWidth="8" strokeDasharray="9 9" />
        <circle cx="33" cy="33" r="10" fill="#d8e4f6" stroke="#70727f" strokeWidth="2" />
      </Ic>
      <Ic>
        <rect width="66" height="66" rx="15" fill="#fff" />
        <path d="M30 31c-3-11 3-19 12-19 8 0 11 6 12 11 6 1 9 6 7 11H32z" fill="#7ac7e5" />
        <rect x="10" y="26" width="26" height="34" rx="3" fill="#2a72c6" /><ellipse cx="23" cy="26" rx="13" ry="5" fill="#8ed7ef" />
        <path d="M10 44h7l3-6 5 12 3-6h8" stroke="#fff" strokeWidth="1.800" fill="none" />
        <circle cx="46" cy="46" r="10" fill="none" stroke="#48b0dc" strokeWidth="6" /><circle cx="46" cy="46" r="14" fill="none" stroke="#48b0dc" strokeWidth="4" strokeDasharray="4 4.800" />
      </Ic>
      <Ic>
        <circle cx="33" cy="33" r="36" fill="#1fa9f6" />
        <path d="M8 37h44c3 0 7-3 8-6 2 1 3 3 3 4-2 4-5 5-8 5-4 11-15 17-27 16C16 55 9 47 8 37z" fill="#fff" />
        {[[11, 29], [18, 29], [25, 29], [32, 29], [39, 29], [25, 22], [32, 22], [32, 15]].map(([x, y]) => (
          <rect key={`${x}-${y}`} x={x} y={y} width="6" height="6" fill="#fff" />
        ))}
      </Ic>
      <div className="w-[2px] h-[76px] bg-[#5d5d5d] mx-[8px] -mt-[2px] shrink-0" />
      <Ic>
        <rect x="-2" y="3" width="62" height="60" fill="#f2f2f2" stroke="#777" strokeWidth=".5" />
        <rect x="-2" y="3" width="62" height="6" fill="#dcdcdc" />
        <rect x="2" y="13" width="38" height="34" fill="#fff" stroke="#bbb" strokeWidth=".7" />
        <path d="M6 18h16M6 22h16M6 26h16" stroke="#789" strokeWidth="1.200" />
        <path d="M44 16h10M44 22h10M44 30h10" stroke="#999" strokeWidth="2" />
        <path d="M40 60V46c0-3 3-4 8-4 8 0 14 8 14 16v9c0 2-2 5-6 5H46c-4 0-6-4-6-7z" fill="#dbe5f6" stroke="#4a648c" strokeWidth="1.500" />
        <circle cx="51" cy="56" r="6" fill="none" stroke="#9092a3" strokeWidth="4" />
      </Ic>
      <Ic>
        <defs><linearGradient id="tr" x1="0" y1="0" x2="1" y2="0"><stop offset="0" stopColor="#8f8f8f" /><stop offset=".5" stopColor="#5a5a5a" /><stop offset="1" stopColor="#9a9a9a" /></linearGradient></defs>
        <path d="M4 6h58l-6 60c-1 4-45 4-46 0z" fill="url(#tr)" />
        <ellipse cx="33" cy="6" rx="29" ry="5" fill="#b5b5b5" />
        <path d="M12 6l6-9 5 6 8-8 6 8 6-6 5 8 6-3 2 6c-14 4-30 4-44-2z" fill="#dedede" />
        <path d="M28 2l5 6 5-5-4 8zM42 0l4 7-6 1z" fill="#666" />
      </Ic>
    </div>
  );
}

export default function App() {
  return (
    <div className="w-[2880px] h-[1800px] overflow-hidden flex flex-col bg-[#111111] font-['Inter','Liberation_Sans',sans-serif]">
      <MenuBar />
      <div className="h-[1633px] shrink-0 flex flex-col rounded-t-[20px] rounded-b-[22px] border-t-[2px] border-[#6e6e6e] pb-[3px] bg-[linear-gradient(to_right,#15352a,#0d2c42_30%,#0d2c42_70%,#0f5a8c)] overflow-hidden">
        <TabStrip />
        <Toolbar />
        <BookmarksBar />
        <Page />
      </div>
      <Dock />
    </div>
  );
}
